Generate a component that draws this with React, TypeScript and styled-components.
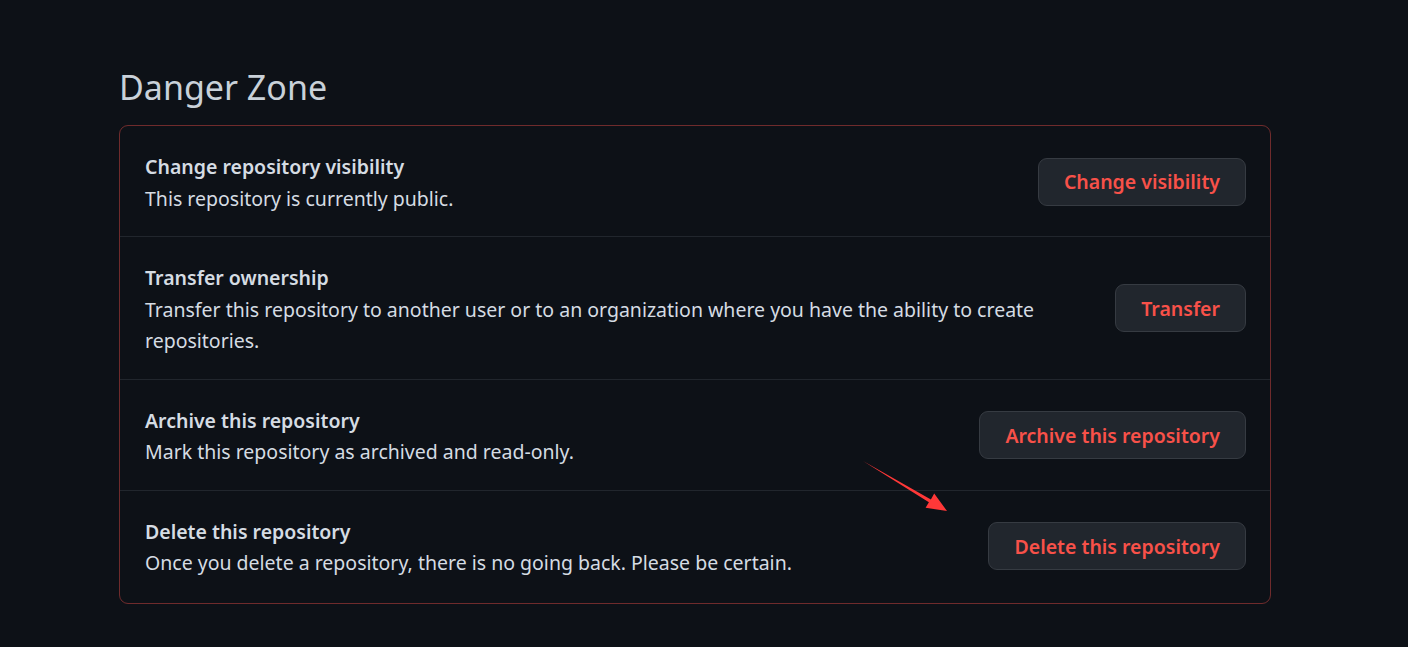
import styled, { createGlobalStyle } from 'styled-components';

const GlobalStyle = createGlobalStyle`
    html, body {
        margin: 0;
        padding: 0;
        background: #0d1117;
    }
    body {
        font-family: "Noto Sans", "Open Sans", "Liberation Sans", sans-serif;
        color: #c9d1d9;
    }
`;

interface Setting {
    title: string;
    description: string;
    action: string;
}

const settings: Setting[] = [
    {
        title: 'Change repository visibility',
        description: 'This repository is currently public.',
        action: 'Change visibility',
    },
    {
        title: 'Transfer ownership',
        description:
            'Transfer this repository to another user or to an organization where you have the ability to create repositories.',
        action: 'Transfer',
    },
    {
        title: 'Archive this repository',
        description: 'Mark this repository as archived and read-only.',
        action: 'Archive this repository',
    },
    {
        title: 'Delete this repository',
        description: 'Once you delete a repository, there is no going back. Please be certain.',
        action: 'Delete this repository',
    },
];

const App = () => {
    return (
        <>
            <GlobalStyle />
            <Page>
                <Heading>Danger Zone</Heading>
                <Box>
                    {settings.map((s) => (
                        <Row key={s.title}>
                            <Info>
                                <Title>{s.title}</Title>
                                <Description>{s.description}</Description>
                            </Info>
                            <DangerButton type="button">{s.action}</DangerButton>
                        </Row>
                    ))}
                    {/* annotation arrow pointing at the delete button */}
                    <Arrow width="90" height="56" viewBox="0 0 90 56">
                        <path d="M0 0 L67.9 38.4 L71.2 32.6 L84 50 L62.6 46.8 L65.9 41.3 Z" fill="#ff3838" />
                    </Arrow>
                </Box>
            </Page>
        </>
    );
};

export default App;

const Page = styled.main`
    padding: 63px 137px 43px 119px;
`;

const Heading = styled.h2`
    margin: 0 0 14px;
    font-size: 34px;
    font-weight: 400;
    line-height: 48px;
    color: #c9d1d9;
`;

const Box = styled.section`
    position: relative;
    border: 1px solid rgba(248, 81, 73, 0.42);
    border-radius: 9px;
`;

const Row = styled.div`
    display: flex;
    align-items: center;
    gap: 48px;
    padding: 23px 24px 22px 25px;
    border-top: 1px solid #21262d;

    &:first-child {
        border-top: none;
    }

    &:last-of-type {
        padding-bottom: 24px;
    }
`;

const Info = styled.div`
    flex: 1;
    min-width: 0;
    padding-top: 2px;
    font-size: 19.5px;
    line-height: 31.5px;
`;

const Title = styled.div`
    font-weight: 600;
    color: #d5dce3;
`;

const Description = styled.div`
    color: #d5dce3;
`;

const DangerButton = styled.button`
    flex-shrink: 0;
    height: 48px;
    padding: 0 25px;
    border: 1px solid #363b42;
    border-radius: 9px;
    background: #21262d;
    color: #f85149;
    font-family: inherit;
    font-size: 19.5px;
    font-weight: 600;
    cursor: pointer;
`;

const Arrow = styled.svg`
    position: absolute;
    left: 743px;
    top: 335px;
    pointer-events: none;
`;
